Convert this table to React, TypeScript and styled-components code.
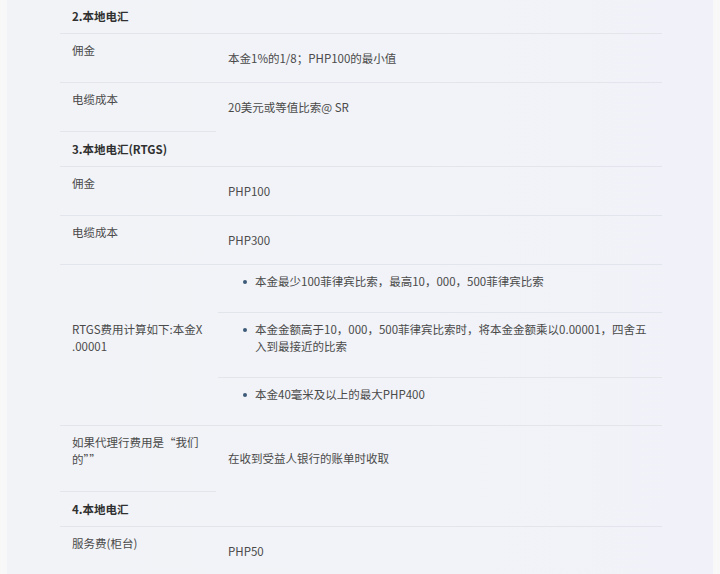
import React from "react";
import styled, { createGlobalStyle } from "styled-components";

const Global = createGlobalStyle`
  html, body { margin: 0; padding: 0; }
  body {
    background: #f8f8f9;
    font-family: "Noto Sans CJK SC", "Noto Sans", sans-serif;
    font-size: 11.5px;
    line-height: 17px;
    color: #4a4a4a;
  }
`;

const Panel = styled.div`
  margin: 0 7px;
  height: 574px;
  overflow: hidden;
  background: linear-gradient(90deg, #f2f3f7 0%, #f1f3f8 60%, #f1f2f9 100%);
`;

const Table = styled.div`
  display: grid;
  grid-template-columns: 156px 446px;
  margin: -1px 0 0 53px;
  width: 602px;
`;

const line = "#e2e5eb";

const Header = styled.div`
  grid-column: 1 / span 2;
  padding: 9px 12px 8px;
  font-weight: 700;
  color: #303030;
  border-bottom: 1px solid ${line};
`;

const Label = styled.div`
  display: flex;
  align-items: center;
  padding: 0 12px;
  border-bottom: 1px solid ${line};
`;

const LabelText = styled.p`
  margin: 0;
  padding: 8px 0 23px;
`;

const Value = styled.div<{ $noLine?: boolean }>`
  display: flex;
  align-items: center;
  padding: 0 12px;
  border-bottom: 1px solid ${(p) => (p.$noLine ? "transparent" : line)};
`;

const ListCell = styled.ul`
  margin: 0;
  padding: 0;
  list-style: none;
  border-bottom: 1px solid ${line};
`;

const Item = styled.li`
  display: flex;
  align-items: flex-start;
  gap: 8px;
  padding: 8px 14px 22px 25px;
  margin-left: 2px;
  border-bottom: 1px solid ${line};
  &:last-child {
    border-bottom: none;
  }
`;

const Dot = styled.span`
  flex: none;
  width: 4px;
  height: 4px;
  margin-top: 6.5px;
  border-radius: 50%;
  background: #3d5b79;
`;

type Row = { label: React.ReactNode; value: React.ReactNode; open?: boolean };

const Pair = ({ label, value, open }: Row) => (
  <>
    <Label>
      <LabelText>{label}</LabelText>
    </Label>
    <Value $noLine={open}>{value}</Value>
  </>
);

const bullets = [
  "本金最少100菲律宾比索，最高10，000，500菲律宾比索",
  "本金金额高于10，000，500菲律宾比索时，将本金金额乘以0.00001，四舍五入到最接近的比索",
  "本金40毫米及以上的最大PHP400",
];

export default function App() {
  return (
    <>
      <Global />
      <Panel>
        <Table>
          <Header>2.本地电汇</Header>
          <Pair label="佣金" value="本金1%的1/8；PHP100的最小值" />
          <Pair label="电缆成本" value="20美元或等值比索@ SR" open />
          <Header>3.本地电汇(RTGS)</Header>
          <Pair label="佣金" value="PHP100" />
          <Pair label="电缆成本" value="PHP300" />
          <Label>
            <LabelText>
              RTGS费用计算如下:本金X
              <br />
              .00001
            </LabelText>
          </Label>
          <ListCell>
            {bullets.map((b, i) => (
              <Item key={i}>
                <Dot />
                <span>{b}</span>
              </Item>
            ))}
          </ListCell>
          <Pair
            label={
              <>
                如果代理行费用是“我们
                <br />
                的””
              </>
            }
            value="在收到受益人银行的账单时收取"
            open
          />
          <Header>4.本地电汇</Header>
          <Pair label="服务费(柜台)" value="PHP50" />
        </Table>
      </Panel>
    </>
  );
}
